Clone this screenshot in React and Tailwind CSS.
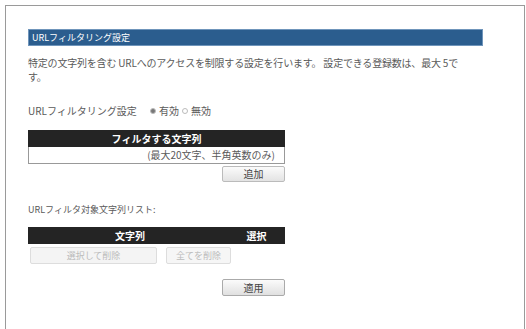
import React from "react";

const F = { fontFamily: '"Noto Sans CJK JP", "Noto Sans", sans-serif' };

export default function App() {
  return (
    <div className="w-[526px] h-[329px] bg-white overflow-hidden" style={F}>
      <div className="ml-[5px] mt-[5px] w-[520px] h-[330px] border border-[#9a9a9a] border-b-0 bg-white pl-[22px] pt-[23px]">
        <div className="w-[455px] h-[17px] bg-[#2b5d8e] border border-[#6f95bb] flex items-center pl-[3px] text-[9px] text-white leading-none">
          URLフィルタリング設定
        </div>
        <p className="mt-[10px] text-[10px] leading-[14px] text-[#5a5a5a] tracking-[-0.2px]">
          特定の文字列を含む URLへのアクセスを制限する設定を行います。 設定できる登録数は、最大 5で
          <br />
          す。
        </p>
        <div className="mt-[22px] flex items-center text-[10px] text-[#5a5a5a] leading-none">
          <span className="w-[122px]">URLフィルタリング設定</span>
          <span className="w-[6px] h-[6px] rounded-full bg-[#777] border border-[#bbb] mr-[3px]"></span>
          <span>有効</span>
          <span className="w-[6px] h-[6px] rounded-full bg-white border border-[#bbb] mx-[3px]"></span>
          <span>無効</span>
        </div>
        <div className="mt-[14px] w-[257px]">
          <div className="h-[17px] bg-[#242424] text-white text-[10px] font-bold flex items-center justify-center leading-none">
            フィルタする文字列
          </div>
          <div className="h-[17px] border border-[#999] border-t-0 flex items-center justify-end pr-[9px] text-[10px] text-[#5a5a5a] leading-none">
            (最大20文字、半角英数のみ)
          </div>
          <div className="flex justify-end mt-[2px]">
            <div className="w-[63px] h-[16px] border border-[#bbb] rounded-[2px] bg-gradient-to-b from-[#fbfbfb] to-[#e3e3e3] flex items-center justify-center text-[10px] text-[#444] leading-none">
              追加
            </div>
          </div>
        </div>
        <div className="mt-[23px] text-[9px] text-[#5a5a5a] leading-none">URLフィルタ対象文字列リスト:</div>
        <div className="mt-[13px] w-[257px]">
          <div className="h-[17px] bg-[#242424] text-white text-[10px] font-bold flex items-center leading-none">
            <span className="flex-1 text-center pl-[2px]">文字列</span>
            <span className="w-[55px] text-center pr-[2px]">選択</span>
          </div>
          <div className="flex mt-[3px] ml-[2px] gap-[9px]">
            <div className="w-[127px] h-[17px] border border-[#ddd] rounded-[2px] bg-[#f4f4f4] flex items-center justify-center text-[9px] text-[#bbb] leading-none">
              選択して削除
            </div>
            <div className="w-[65px] h-[17px] border border-[#ddd] rounded-[2px] bg-[#f6f6f6] flex items-center justify-center text-[9px] text-[#bbb] leading-none">
              全てを削除
            </div>
          </div>
          <div className="flex justify-end mt-[15px]">
            <div className="w-[63px] h-[17px] border border-[#aaa] rounded-[2px] bg-gradient-to-b from-[#fbfbfb] to-[#e0e0e0] flex items-center justify-center text-[10px] text-[#444] leading-none">
              適用
            </div>
          </div>
        </div>
      </div>
    </div>
  );
}
